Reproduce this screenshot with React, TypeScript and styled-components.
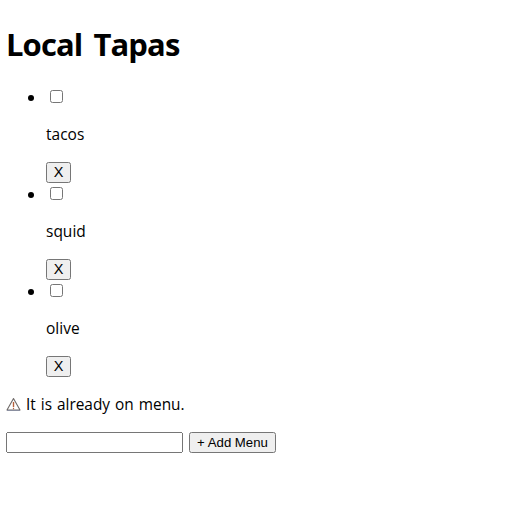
import React from "react";
import styled, { createGlobalStyle } from "styled-components";

const Global = createGlobalStyle`
  body { margin: 0 6px; font-family: "Open Sans", "Noto Sans CJK KR", sans-serif; font-size: 16px; color: #000; background: #fff; }
`;
const Title = styled.h1`
  font-size: 31px; font-weight: 700; line-height: 44px; margin: 0; padding-top: 22px; margin-bottom: 21px; word-spacing: 4px; letter-spacing: -0.9px;
`;
const Menu = styled.ul`
  margin: 0; padding: 0 0 0 40px;
`;
const Item = styled.li`
  line-height: 21px; padding-bottom: 1px;
`;
const Check = styled.input.attrs({ type: "checkbox" })`
  display: inline-block; margin: 2px 3px 3px 4px; vertical-align: 0;
`;
const Name = styled.p`
  margin: 16px 0 17px; line-height: 21px; font-size: 15.5px;
`;
const SmallButton = styled.button`
  font: 14.5px/1 "Liberation Sans", sans-serif; height: 21px; width: 25px; padding: 1px 0; display: inline-block; vertical-align: top;
`;
const Notice = styled.p`
  margin: 16px 0 17px; line-height: 21px; font-size: 15.4px; display: flex; align-items: center; gap: 5px; word-spacing: 1px;
`;
const Warn = styled.svg`
  width: 15px; height: 15px; flex: none;
`;
const Form = styled.form`
  display: flex; align-items: center; gap: 6px;
`;
const TextBox = styled.input.attrs({ type: "text" })`
  width: 177px; height: 21px; box-sizing: border-box; margin: 0;
`;
const AddButton = styled.button`
  font: 13.2px/1 "Liberation Sans", sans-serif; height: 21px; width: 87px; padding: 1px 0; margin: 0;
`;

const items = ["tacos", "squid", "olive"];

export default function App() {
  return (
    <>
      <Global />
      <Title>Local Tapas</Title>
      <Menu>
        {items.map((n) => (
          <Item key={n}>
            <Check />
            <Name>{n}</Name>
            <SmallButton>X</SmallButton>
          </Item>
        ))}
      </Menu>
      <Notice>
        <Warn viewBox="0 0 15 15" fill="none">
          <path d="M7.5 1.5 L14 13 H1 Z" stroke="#6f6a68" strokeWidth="1.1" strokeLinejoin="round" />
          <path d="M1 13.5 H14" stroke="#8a8fa0" strokeWidth="1" />
          <path d="M7.5 5 V10" stroke="#b5603a" strokeWidth="1.4" />
          <path d="M7.5 10.8 V12.2" stroke="#b5603a" strokeWidth="1.2" />
        </Warn>
        It is already on menu.
      </Notice>
      <Form onSubmit={(e) => e.preventDefault()}>
        <TextBox />
        <AddButton>+ Add Menu</AddButton>
      </Form>
    </>
  );
}
